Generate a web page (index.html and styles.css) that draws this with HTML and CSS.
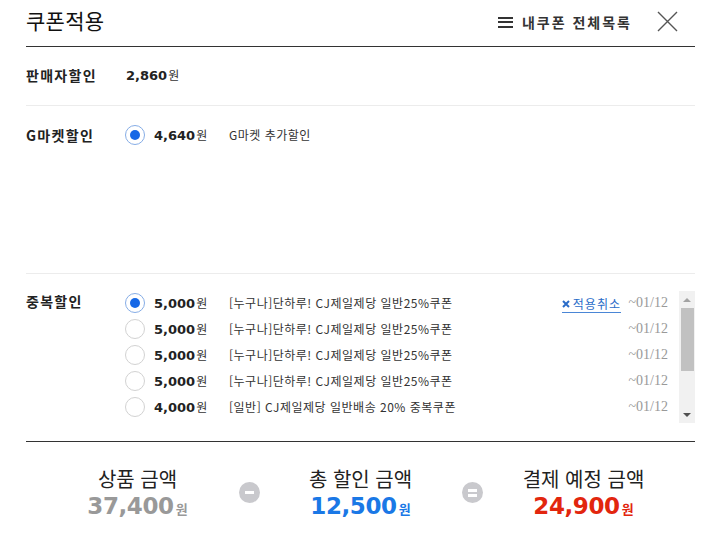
FILE: index.html
```html
<!DOCTYPE html>
<html lang="ko">
<head>
<meta charset="utf-8">
<title>쿠폰적용</title>
<link rel="stylesheet" href="styles.css">
</head>
<body>
<div class="popup">
  <header class="head">
    <h1 class="title">쿠폰적용</h1>
    <div class="head-right">
      <a class="mylist" href="#"><span class="burger"><i></i><i></i><i></i></span>내쿠폰 전체목록</a>
      <button class="close" type="button" aria-label="닫기">
        <svg width="21" height="21" viewBox="0 0 21 21"><path d="M1 1 L20 20 M20 1 L1 20" stroke="#555" stroke-width="1.4" fill="none"/></svg>
      </button>
    </div>
  </header>

  <section class="sec sec-seller">
    <div class="label">판매자할인</div>
    <div class="amt"><b>2,860</b>원</div>
  </section>

  <section class="sec sec-gmarket">
    <div class="label">G마켓할인</div>
    <div class="row">
      <span class="radio on"></span>
      <span class="amt"><b>4,640</b>원</span>
      <span class="desc">G마켓 추가할인</span>
    </div>
  </section>

  <section class="sec sec-dup">
    <div class="label">중복할인</div>
    <div class="listwrap">
      <ul class="list">
        <li class="row">
          <span class="radio on"></span>
          <span class="amt"><b>5,000</b>원</span>
          <span class="desc">[누구나]단하루! CJ제일제당 일반25%쿠폰</span>
          <a class="cancel" href="#"><svg width="8" height="8" viewBox="0 0 8 8"><path d="M1 1 L7 7 M7 1 L1 7" stroke="#2a6cc8" stroke-width="2" fill="none"/></svg>적용취소</a>
          <span class="date">~01/12</span>
        </li>
        <li class="row">
          <span class="radio"></span>
          <span class="amt"><b>5,000</b>원</span>
          <span class="desc">[누구나]단하루! CJ제일제당 일반25%쿠폰</span>
          <span class="date">~01/12</span>
        </li>
        <li class="row">
          <span class="radio"></span>
          <span class="amt"><b>5,000</b>원</span>
          <span class="desc">[누구나]단하루! CJ제일제당 일반25%쿠폰</span>
          <span class="date">~01/12</span>
        </li>
        <li class="row">
          <span class="radio"></span>
          <span class="amt"><b>5,000</b>원</span>
          <span class="desc">[누구나]단하루! CJ제일제당 일반25%쿠폰</span>
          <span class="date">~01/12</span>
        </li>
        <li class="row">
          <span class="radio"></span>
          <span class="amt"><b>4,000</b>원</span>
          <span class="desc">[일반] CJ제일제당 일반배송 20% 중복쿠폰</span>
          <span class="date">~01/12</span>
        </li>
      </ul>
      <div class="scrollbar">
        <span class="arrow up"></span>
        <span class="track"><span class="thumb"></span></span>
        <span class="arrow down"></span>
      </div>
    </div>
  </section>

  <div class="summary">
    <div class="col">
      <div class="sum-label">상품 금액</div>
      <div class="sum-num gray">37,400<span class="won">원</span></div>
    </div>
    <span class="op minus"><i></i></span>
    <div class="col">
      <div class="sum-label">총 할인 금액</div>
      <div class="sum-num blue">12,500<span class="won">원</span></div>
    </div>
    <span class="op equal"><i></i><i></i></span>
    <div class="col">
      <div class="sum-label">결제 예정 금액</div>
      <div class="sum-num red">24,900<span class="won">원</span></div>
    </div>
  </div>
</div>
</body>
</html>
```

FILE: styles.css
```css
html, body {
  margin: 0;
  padding: 0;
  background: #fff;
}
body {
  font-family: "Noto Sans CJK KR", "Noto Sans", sans-serif;
  color: #222;
}
.popup {
  margin-left: 26px;
  width: 669px;
}

/* header */
.head {
  height: 46px;
  border-bottom: 1px solid #333;
  display: flex;
  justify-content: space-between;
  align-items: flex-start;
}
.title {
  margin: 0;
  padding-top: 7px;
  font-size: 21px;
  font-weight: 400;
  line-height: 27px;
  letter-spacing: 0.3px;
  color: #111;
}
.head-right {
  display: flex;
  align-items: center;
  padding-top: 8px;
  margin-right: 17px;
}
.mylist {
  display: flex;
  align-items: center;
  font-size: 14px;
  font-weight: 700;
  line-height: 28px;
  letter-spacing: 2px;
  color: #333;
  text-decoration: none;
}
.burger {
  display: flex;
  flex-direction: column;
  justify-content: space-between;
  width: 15px;
  height: 11px;
  margin-right: 9px;
}
.burger i {
  display: block;
  height: 2px;
  background: #333;
}
.close {
  margin: -2px 0 0 25px;
  padding: 0;
  border: 0;
  background: none;
  width: 21px;
  height: 21px;
  display: block;
}
.close svg { display: block; }

/* sections */
.sec {
  display: flex;
  border-bottom: 1px solid #ececec;
}
.label {
  flex: none;
  width: 99px;
  font-size: 14px;
  font-weight: 700;
  line-height: 20px;
  letter-spacing: 1.3px;
  color: #222;
}
.sec-seller {
  padding: 18px 0 19px;
}
.sec-seller .amt { width: auto; margin-left: 1px; }
.sec-gmarket {
  padding-top: 19px;
  height: 148px;
}
.sec-gmarket .row { height: 20px; }
.sec-dup {
  padding: 16px 0 18px;
  border-bottom: 1px solid #333;
}
.sec-dup .label { line-height: 20px; padding-top: 1px; }

.row {
  display: flex;
  align-items: center;
  flex: 1;
}
.amt {
  width: 75px;
  flex: none;
  font-size: 12px;
  color: #333;
  line-height: 20px;
}
.amt b {
  font-family: "DejaVu Sans", sans-serif;
  font-weight: 700;
  font-size: 13px;
  color: #222;
  margin-right: 1px;
}
.radio {
  flex: none;
  width: 20px;
  height: 20px;
  box-sizing: border-box;
  border: 1px solid #d2d2d2;
  border-radius: 50%;
  background: #fff;
  margin-right: 9px;
  display: flex;
  align-items: center;
  justify-content: center;
}
.radio.on {
  border-color: #86ade6;
}
.radio.on::after {
  content: "";
  width: 10px;
  height: 10px;
  border-radius: 50%;
  background: #1668e6;
}
.desc {
  flex: 1;
  font-size: 12px;
  letter-spacing: 0.5px;
  color: #333;
  line-height: 20px;
  white-space: nowrap;
}

/* coupon list */
.listwrap {
  flex: 1;
  display: flex;
  height: 133px;
}
.list {
  list-style: none;
  margin: 0;
  padding: 0 11px 0 0;
  flex: 1;
  overflow: hidden;
}
.list .row {
  height: 26px;
}
.cancel {
  display: flex;
  align-items: center;
  gap: 3px;
  font-size: 12px;
  line-height: 16px;
  letter-spacing: 1px;
  color: #2a6cc8;
  text-decoration: none;
  border-bottom: 1px solid #4a86d6;
  margin-right: 6px;
  margin-top: 2px;
}
.cancel svg { display: block; }
.date {
  flex: none;
  width: 41px;
  text-align: right;
  font-family: "Liberation Serif", serif;
  font-size: 14px;
  color: #999;
}

.scrollbar {
  flex: none;
  width: 16px;
  height: 132px;
  margin-top: 1px;
  background: #f1f1f1;
  display: flex;
  flex-direction: column;
  align-items: center;
}
.arrow {
  flex: none;
  height: 17px;
  width: 16px;
  display: flex;
  align-items: center;
  justify-content: center;
}
.arrow::after {
  content: "";
  border-left: 4px solid transparent;
  border-right: 4px solid transparent;
}
.arrow.up::after { border-bottom: 4px solid #a3a3a3; }
.arrow.down::after { border-top: 4px solid #505050; }
.track {
  flex: 1;
  width: 16px;
  display: flex;
  justify-content: center;
}
.thumb {
  display: block;
  width: 13px;
  height: 63px;
  background: #c1c1c1;
}

/* summary */
.summary {
  display: flex;
  padding-top: 24px;
}
.col {
  flex: 1;
  text-align: center;
}
.sum-label {
  font-size: 20px;
  line-height: 26px;
  color: #222;
}
.sum-num {
  font-family: "DejaVu Sans", sans-serif;
  font-weight: 700;
  font-size: 23px;
  letter-spacing: -0.4px;
  line-height: 28px;
}
.sum-num .won {
  font-family: "Noto Sans CJK KR", sans-serif;
  font-size: 13px;
  letter-spacing: 0;
  margin-left: 2px;
}
.gray { color: #999; }
.blue { color: #1a78e6; }
.red { color: #e2260e; }

.op {
  flex: none;
  width: 21px;
  height: 21px;
  margin: 16px -10.5px 0;
  border-radius: 50%;
  background: #c9c9cd;
  display: flex;
  flex-direction: column;
  align-items: center;
  justify-content: center;
  gap: 2px;
}
.op i {
  display: block;
  width: 9px;
  height: 3px;
  background: #fff;
}
```
